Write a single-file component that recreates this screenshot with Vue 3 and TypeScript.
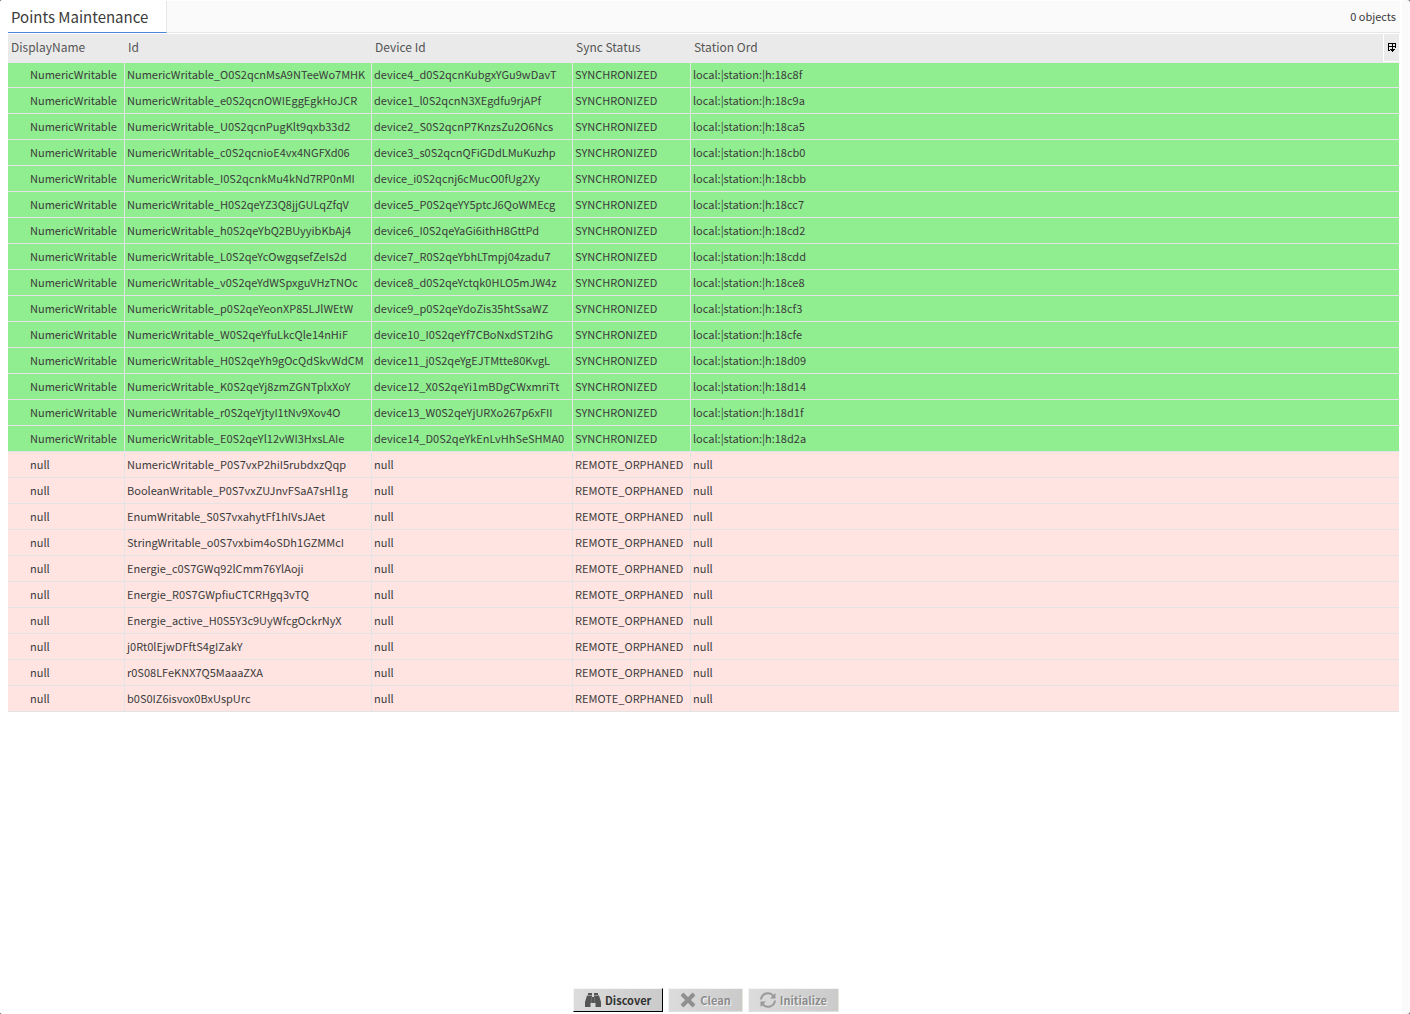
<script setup lang="ts">
interface PointRow {
  name: string
  id: string
  device: string
  status: 'SYNCHRONIZED' | 'REMOTE_ORPHANED'
  ord: string
}

const synced: [string, string, string][] = [
  ['O0S2qcnMsA9NTeeWo7MHK', 'device4_d0S2qcnKubgxYGu9wDavT', '18c8f'],
  ['e0S2qcnOWIEggEgkHoJCR', 'device1_l0S2qcnN3XEgdfu9rjAPf', '18c9a'],
  ['U0S2qcnPugKlt9qxb33d2', 'device2_S0S2qcnP7KnzsZu2O6Ncs', '18ca5'],
  ['c0S2qcnioE4vx4NGFXd06', 'device3_s0S2qcnQFiGDdLMuKuzhp', '18cb0'],
  ['I0S2qcnkMu4kNd7RP0nMI', 'device_i0S2qcnj6cMucO0fUg2Xy', '18cbb'],
  ['H0S2qeYZ3Q8jjGULqZfqV', 'device5_P0S2qeYY5ptcJ6QoWMEcg', '18cc7'],
  ['h0S2qeYbQ2BUyyibKbAj4', 'device6_I0S2qeYaGi6ithH8GttPd', '18cd2'],
  ['L0S2qeYcOwgqsefZeIs2d', 'device7_R0S2qeYbhLTmpj04zadu7', '18cdd'],
  ['v0S2qeYdWSpxguVHzTNOc', 'device8_d0S2qeYctqk0HLO5mJW4z', '18ce8'],
  ['p0S2qeYeonXP85LJlWEtW', 'device9_p0S2qeYdoZis35htSsaWZ', '18cf3'],
  ['W0S2qeYfuLkcQle14nHiF', 'device10_I0S2qeYf7CBoNxdST2IhG', '18cfe'],
  ['H0S2qeYh9gOcQdSkvWdCM', 'device11_j0S2qeYgEJTMtte80KvgL', '18d09'],
  ['K0S2qeYj8zmZGNTplxXoY', 'device12_X0S2qeYi1mBDgCWxmriTt', '18d14'],
  ['r0S2qeYjtyI1tNv9Xov4O', 'device13_W0S2qeYjURXo267p6xFII', '18d1f'],
  ['E0S2qeYl12vWI3HxsLAIe', 'device14_D0S2qeYkEnLvHhSeSHMA0', '18d2a'],
]

const orphaned: string[] = [
  'NumericWritable_P0S7vxP2hiI5rubdxzQqp',
  'BooleanWritable_P0S7vxZUJnvFSaA7sHl1g',
  'EnumWritable_S0S7vxahytFf1hIVsJAet',
  'StringWritable_o0S7vxbim4oSDh1GZMMcI',
  'Energie_c0S7GWq92lCmm76YlAoji',
  'Energie_R0S7GWpfiuCTCRHgq3vTQ',
  'Energie_active_H0S5Y3c9UyWfcgOckrNyX',
  'j0Rt0lEjwDFftS4gIZakY',
  'r0S08LFeKNX7Q5MaaaZXA',
  'b0S0IZ6isvox0BxUspUrc',
]

const rows: PointRow[] = [
  ...synced.map(([id, device, handle]): PointRow => ({
    name: 'NumericWritable',
    id: `NumericWritable_${id}`,
    device,
    status: 'SYNCHRONIZED',
    ord: `local:|station:|h:${handle}`,
  })),
  ...orphaned.map((id): PointRow => ({
    name: 'null',
    id,
    device: 'null',
    status: 'REMOTE_ORPHANED',
    ord: 'null',
  })),
]
</script>

<template>
  <div class="window">
    <main class="pane">
      <header class="titlebar">
        <h1 class="tab">Points Maintenance</h1>
        <span class="count">0 objects</span>
      </header>

      <table class="points">
        <colgroup>
          <col class="c-name" />
          <col class="c-id" />
          <col class="c-device" />
          <col class="c-status" />
          <col />
        </colgroup>
        <thead>
          <tr>
            <th scope="col">DisplayName</th>
            <th scope="col">Id</th>
            <th scope="col">Device Id</th>
            <th scope="col">Sync Status</th>
            <th scope="col">
              <div class="last-head">
                <span>Station Ord</span>
                <button class="options" type="button" aria-label="Table options">
                  <svg width="8" height="9" viewBox="0 0 8 9" shape-rendering="crispEdges">
                    <path d="M0 0h8v1H0zM0 1h1v7H0zM1 7h1v1H1zM7 1h1v4H7zM1 3h6v1H1zM4 1h1v2H4zM4 4h1v2H4zM2 6h5v1H2zM3 7h3v1H3zM4 8h1v1H4z" fill="#000" />
                  </svg>
                </button>
              </div>
            </th>
          </tr>
        </thead>
        <tbody>
          <tr v-for="row in rows" :key="row.id" :class="row.status === 'SYNCHRONIZED' ? 'ok' : 'orphan'">
            <td>{{ row.name }}</td>
            <td>{{ row.id }}</td>
            <td>{{ row.device }}</td>
            <td>{{ row.status }}</td>
            <td>{{ row.ord }}</td>
          </tr>
        </tbody>
      </table>

      <footer class="actions">
        <button class="action focused" type="button">
          <svg width="16" height="16" viewBox="0 0 16 16" fill="#555">
            <path d="M3 1h4v2H3zM9 1h4v2H9zM2 3.500h5V5h2V3.500h5L16 10v5h-5.500v-4h-5v4H0v-5z" />
            <path d="M6.500 5v6M9.500 5v6" stroke="#888" stroke-width=".5" />
          </svg>
          <span>Discover</span>
        </button>
        <button class="action" type="button" disabled>
          <svg width="16" height="16" viewBox="0 0 16 16" fill="none" stroke="#8f8f8f" stroke-width="4">
            <path d="M2 2l12 12M14 2L2 14" />
          </svg>
          <span>Clean</span>
        </button>
        <button class="action" type="button" disabled>
          <svg width="16" height="16" viewBox="0 0 16 16" fill="none" stroke="#999" stroke-width="2">
            <path d="M1 7.500A7 7 0 0 1 13.500 4M15 8.500A7 7 0 0 1 2.500 12" />
            <path d="M15.500 1v5.500H10zM.5 15V9.500H6z" fill="#999" stroke="none" />
          </svg>
          <span>Initialize</span>
        </button>
      </footer>
    </main>
  </div>
</template>

<style>
html {
  background: #6f747c;
}
body {
  margin: 0;
}
</style>

<style scoped>
.window {
  box-sizing: border-box;
  min-height: 100vh;
  display: flex;
  padding-right: 8px;
  background: #fafafa;
  border-radius: 3px;
  font-family: "Noto Sans CJK SC", "Noto Sans", sans-serif;
  font-size: 12px;
  line-height: 16px;
  color: #3b3b3b;
}
.pane {
  box-sizing: border-box;
  flex: 1;
  min-width: 0;
  display: flex;
  flex-direction: column;
  padding: 1px 2px 2px 8px;
  background: #fff;
  border-radius: 3px 0 0 3px;
}
.titlebar {
  box-sizing: border-box;
  height: 32px;
  margin-bottom: 1px;
  display: flex;
  justify-content: space-between;
  align-items: flex-start;
  background: #fafafa;
  border-bottom: 1px solid #e6e6e6;
}
.tab {
  box-sizing: border-box;
  height: 32px;
  margin: 0;
  padding: 0 18px 0 3px;
  background: #fff;
  border-right: 1px solid #e6e6e6;
  border-bottom: 1px solid #4a86d8;
  font-size: 15px;
  font-weight: 400;
  line-height: 32px;
}
.count {
  padding-right: 4px;
  font-size: 11px;
  line-height: 31px;
}
.points {
  width: calc(100% - 1px);
  table-layout: fixed;
  border-collapse: separate;
  border-spacing: 0;
}
.c-name {
  width: 117px;
}
.c-id {
  width: 247px;
}
.c-device {
  width: 201px;
}
.c-status {
  width: 118px;
}
.points th {
  height: 28px;
  padding: 0 0 0 3px;
  background: #eaeaea;
  border-bottom: 1px solid #eaeaea;
  color: #555;
  font-weight: 400;
  line-height: 26px;
  text-align: left;
  vertical-align: top;
}
.last-head {
  height: 28px;
  display: flex;
  justify-content: space-between;
  align-items: flex-start;
}
.options {
  box-sizing: border-box;
  width: 16px;
  height: 28px;
  padding: 0;
  display: flex;
  align-items: center;
  justify-content: center;
  background: #eaeaea;
  border: 1px solid #fff;
  border-width: 0 0 1px 1px;
}
.points td {
  box-sizing: border-box;
  height: 26px;
  padding: 0 0 2px 2px;
  border-right: 1px solid #e4e4e4;
  border-bottom: 1px solid #e4e4e4;
  font-size: 11px;
  white-space: nowrap;
}
.points td:first-child {
  padding-left: 22px;
}
.points td:last-child {
  border-right: 0;
}
.points tbody tr:first-child td {
  height: 25px;
}
.ok {
  background: #90ee90;
}
.orphan {
  background: #ffe4e1;
}
.actions {
  margin-top: auto;
  padding-left: 4px;
  display: flex;
  justify-content: center;
  gap: 5px;
}
.action {
  box-sizing: border-box;
  height: 24px;
  padding: 0 11px;
  display: flex;
  align-items: center;
  gap: 4px;
  border: 1px solid #f4f4f4;
  border-right-color: #e6e6dc;
  border-bottom-color: #e0e0e0;
  background: linear-gradient(100deg, #dcdcdc, #cacaca);
  color: #8c8c8c;
  font: inherit;
  font-size: 11px;
  font-weight: 700;
  text-shadow: 1px 1px 0 #f4f4f4;
}
.focused {
  border-right-color: #000;
  border-bottom-color: #000;
  color: #333;
  text-shadow: none;
}
</style>
